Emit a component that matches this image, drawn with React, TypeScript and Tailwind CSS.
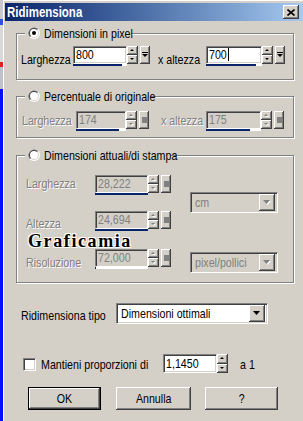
import React from "react";

const FONT = "font-['Liberation_Sans',Arial,sans-serif]";
const SUNKEN =
  "border border-t-[#808080] border-l-[#808080] border-r-white border-b-white shadow-[inset_1px_1px_0_#404040,inset_-1px_-1px_0_#d4d0c8]";
const RAISED =
  "bg-[#d4d0c8] shadow-[inset_-1px_-1px_0_#404040,inset_1px_1px_0_#ffffff,inset_-2px_-2px_0_#808080]";
const ETCHED = "border border-[#808080] shadow-[inset_1px_1px_0_#ffffff,1px_1px_0_#ffffff]";
const DIS = "text-[#808080] [text-shadow:1px_1px_0_#ffffff]";

function T({ children, className = "", center }: { children: React.ReactNode; className?: string; center?: boolean }) {
  return (
    <span
      className={`inline-block whitespace-nowrap ${center ? "origin-center" : "origin-left"} scale-x-[0.82] ${className}`}
    >
      {children}
    </span>
  );
}

function Radio({ checked }: { checked?: boolean }) {
  return (
    <svg width="12" height="12" viewBox="0 0 12 12" className="shrink-0">
      <circle cx="6" cy="6" r="6" fill="#ffffff" />
      <path d="M1.76 10.24 A6 6 0 0 1 10.24 1.76 Z" fill="#808080" />
      <circle cx="6" cy="6" r="5" fill="#d4d0c8" />
      <path d="M2.46 9.54 A5 5 0 0 1 9.54 2.46 Z" fill="#404040" />
      <circle cx="6" cy="6" r="4" fill="#ffffff" />
      {checked && <circle cx="6" cy="6" r="2" fill="#000000" />}
    </svg>
  );
}

function Arrow({ dir, disabled, size = 5 }: { dir: "up" | "down"; disabled?: boolean; size?: number }) {
  const h = Math.ceil(size / 2);
  const pts = dir === "up" ? `0,${h} ${size},${h} ${size / 2},0` : `0,0 ${size},0 ${size / 2},${h}`;
  return (
    <svg width={size + 1} height={h + 1} viewBox={`0 0 ${size + 1} ${h + 1}`}>
      {disabled && <polygon points={pts} fill="#ffffff" transform="translate(1,1)" />}
      <polygon points={pts} fill={disabled ? "#808080" : "#000000"} />
    </svg>
  );
}

function Spin({ disabled, h = "h-[18px]" }: { disabled?: boolean; h?: string }) {
  return (
    <div className={`w-[11px] ${h} flex flex-col`}>
      <div className={`flex-1 ${RAISED} flex items-center justify-center`}>
        <Arrow dir="up" disabled={disabled} size={4} />
      </div>
      <div className={`flex-1 ${RAISED} flex items-center justify-center`}>
        <Arrow dir="down" disabled={disabled} size={4} />
      </div>
    </div>
  );
}

function Preset({ disabled }: { disabled?: boolean }) {
  return (
    <div className={`w-[10px] h-[18px] ${RAISED} flex items-center justify-center`}>
      {disabled ? (
        <div className="w-[5px] h-[6px] bg-[#808080]" />
      ) : (
        <svg width="6" height="6" viewBox="0 0 6 6">
          <rect x="0" y="0" width="6" height="1" fill="#000" />
          <polygon points="0,2 6,2 3,5" fill="#000" />
        </svg>
      )}
    </div>
  );
}

function SpinEdit({
  value,
  w,
  frac,
  disabled,
  cursor,
}: {
  value: string;
  w: string;
  frac: number;
  disabled?: boolean;
  cursor?: boolean;
}) {
  return (
    <div className="flex items-start">
      <div className="flex flex-col">
        <div className={`${w} h-[18px] ${SUNKEN} ${disabled ? "bg-[#d4d0c8] text-[#808080]" : "bg-white"} pl-[2px] pt-[1px] flex`}>
          <T>{value}</T>
          {cursor && <span className="w-[1px] h-[13px] bg-black -ml-[3px]" />}
        </div>
        <div className={`${w} h-[2px] bg-white flex`}>
          <div className="h-[2px] bg-[#0a246a]" style={{ width: `${frac * 100}%` }} />
        </div>
      </div>
      <Spin disabled={disabled} />
      <div className="w-[2px]" />
      <Preset disabled={disabled} />
    </div>
  );
}

function Combo({ text, w, disabled }: { text: string; w: string; disabled?: boolean }) {
  return (
    <div className={`${w} h-[21px] ${SUNKEN} ${disabled ? "bg-[#d4d0c8] text-[#808080]" : "bg-white"} flex items-center p-[2px]`}>
      <span className="flex-1 pl-[2px] overflow-hidden">
        <T>{text}</T>
      </span>
      <div className={`w-[16px] h-[17px] ${RAISED} flex items-center justify-center`}>
        <Arrow dir="down" disabled={disabled} size={7} />
      </div>
    </div>
  );
}

function Button({ label, w, def }: { label: string; w: string; def?: boolean }) {
  return (
    <div className={`${w} h-[23px] ${def ? "border border-black" : ""}`}>
      <div className={`w-full h-full ${RAISED} flex items-center justify-center`}>
        <T center>{label}</T>
      </div>
    </div>
  );
}

function LeftStrip() {
  return (
    <div className="w-[3px] h-full flex flex-col shrink-0">
      <div className="h-[19px] bg-[#c8c8d0]" />
      <div className="h-[6px] bg-[#3050e0]" />
      <div className="h-[37px] bg-[#d8d8d8]" />
      <div className="h-[5px] bg-[#e02020]" />
      <div className="h-[22px] bg-[#c0c0c8]" />
      <div className="flex-1 bg-[#0010f8]" />
    </div>
  );
}

function Legend({ children, checked }: { children: React.ReactNode; checked?: boolean }) {
  return (
    <div className="absolute left-[8px] top-[-7px] h-[12px] pl-[3px] pr-[1px] bg-[#d4d0c8] flex items-center">
      <Radio checked={checked} />
      <span className="ml-[4px] flex">{children}</span>
    </div>
  );
}

export default function App() {
  return (
    <div className={`w-[303px] h-[421px] overflow-hidden flex bg-[#d4d0c8] text-[13px] leading-[13px] text-black ${FONT}`}>
      <LeftStrip />
      <div className="flex-1 h-full border-l border-t border-white pt-[2px] pl-[1px] flex flex-col">
        {/* title bar */}
        <div className="h-[18px] shrink-0 bg-gradient-to-r from-[#0a246a] to-[#a6caf0] flex items-center justify-between pl-[2px] pr-[4px]">
          <T className="text-white font-bold text-[14px] leading-[14px]">Ridimensiona</T>
          <div className={`w-[16px] h-[14px] ${RAISED} flex items-center justify-center`}>
            <svg width="8" height="7" viewBox="0 0 8 7">
              <path d="M0.5 0.5 L7.5 6.5 M7.5 0.5 L0.5 6.5" stroke="#000" strokeWidth="1.6" />
            </svg>
          </div>
        </div>

        <div className="pl-[11px] flex flex-col">
          {/* group 1 */}
          <div className={`relative mt-[12px] w-[278px] h-[47px] shrink-0 ${ETCHED}`}>
            <Legend checked>
              <span className="w-[86px]">
                <T>Dimensioni in pixel</T>
              </span>
            </Legend>
            <div className="flex items-start pt-[12px] pl-[4px]">
              <span className="w-[52px] mt-[7px]">
                <T>Larghezza</T>
              </span>
              <SpinEdit value="800" w="w-[54px]" frac={0.9} />
              <span className="ml-[8px] w-[48px] mt-[7px]">
                <T>x altezza</T>
              </span>
              <SpinEdit value="700" w="w-[56px]" frac={0.9} cursor />
            </div>
          </div>

          {/* group 2 */}
          <div className={`relative mt-[16px] w-[278px] h-[42px] shrink-0 ${ETCHED}`}>
            <Legend>
              <span className="w-[105px]">
                <T>Percentuale di originale</T>
              </span>
            </Legend>
            <div className="flex items-start pt-[14px] pl-[5px]">
              <span className="w-[54px] mt-[3px]">
                <T className={DIS}>Larghezza</T>
              </span>
              <SpinEdit value="174" w="w-[50px]" frac={0.86} disabled />
              <span className="ml-[12px] w-[45px] mt-[3px]">
                <T className={DIS}>x altezza</T>
              </span>
              <SpinEdit value="175" w="w-[55px]" frac={0.8} disabled />
            </div>
          </div>

          {/* group 3 */}
          <div className={`relative mt-[17px] w-[278px] h-[128px] shrink-0 ${ETCHED}`}>
            <Legend>
              <span className="w-[126px]">
                <T>Dimensioni attuali/di stampa</T>
              </span>
            </Legend>
            <div className="flex pt-[19px] pl-[9px]">
              <div className="flex flex-col w-[164px]">
                <div className="flex items-start">
                  <span className="w-[69px] mt-[2px]">
                    <T className={DIS}>Larghezza</T>
                  </span>
                  <SpinEdit value="28,222" w="w-[53px]" frac={1} disabled />
                </div>
                <div className="flex items-start mt-[16px]">
                  <span className="w-[69px] mt-[6px]">
                    <T className={DIS}>Altezza</T>
                  </span>
                  <SpinEdit value="24,694" w="w-[53px]" frac={1} disabled />
                </div>
                <div className="flex items-start mt-[18px]">
                  <span className="w-[69px] mt-[7px]">
                    <T className={DIS}>Risoluzione</T>
                  </span>
                  <SpinEdit value="72,000" w="w-[53px]" frac={0.02} disabled />
                </div>
              </div>
              <div className="flex flex-col">
                <div className="mt-[17px]">
                  <Combo text="cm" w="w-[88px]" disabled />
                </div>
                <div className="mt-[39px]">
                  <Combo text="pixel/pollici" w="w-[88px]" disabled />
                </div>
              </div>
            </div>
            <div className="absolute left-[11px] top-[77px] font-['Liberation_Serif',serif] font-bold text-[18px] leading-[16px] tracking-[1.6px] text-black [text-shadow:1px_1px_0_#ffffff,-1px_-1px_0_#ffffff,1px_-1px_0_#ffffff,-1px_1px_0_#ffffff]">
              Graficamia
            </div>
          </div>

          {/* ridimensiona tipo */}
          <div className="flex items-start mt-[20px] pl-[5px]">
            <span className="w-[95px] mt-[6px]">
              <T>Ridimensiona tipo</T>
            </span>
            <Combo text="Dimensioni ottimali" w="w-[152px]" />
          </div>

          {/* mantieni proporzioni */}
          <div className="flex items-start mt-[30px] pl-[7px]">
            <div className={`w-[13px] h-[13px] mt-[4px] ${SUNKEN} bg-white`} />
            <span className="ml-[5px] w-[122px] mt-[4px]">
              <T>Mantieni proporzioni di</T>
            </span>
            <div className={`w-[54px] h-[19px] ${SUNKEN} bg-white pl-[2px] pt-[2px]`}>
              <T>1,1450</T>
            </div>
            <Spin h="h-[19px]" />
            <span className="ml-[12px] mt-[4px]">
              <T>a 1</T>
            </span>
          </div>

          {/* buttons */}
          <div className="flex items-start mt-[14px] pl-[12px]">
            <Button label="OK" w="w-[73px]" def />
            <div className="w-[15px]" />
            <Button label="Annulla" w="w-[75px]" />
            <div className="w-[14px]" />
            <Button label="?" w="w-[73px]" />
          </div>
        </div>
      </div>
    </div>
  );
}
